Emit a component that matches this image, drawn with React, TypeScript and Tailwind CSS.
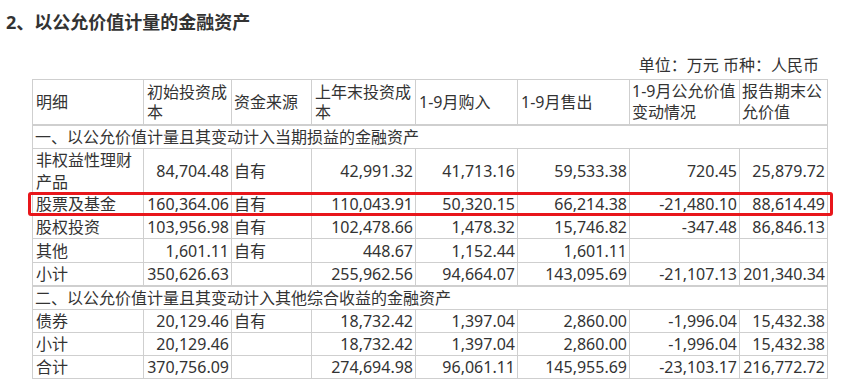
import React from "react";

type Row = {
  name: React.ReactNode;
  h: string;
  cells: string[];
};

const cols = "grid-cols-[110px_87px_79px_103px_101px_111px_109px_87px]";

const rows1: Row[] = [
  { name: <>非权益性理财<br />产品</>, h: "h-[43px]", cells: ["84,704.48", "自有", "42,991.32", "41,713.16", "59,533.38", "720.45", "25,879.72"] },
  { name: "股票及基金", h: "h-[22px]", cells: ["160,364.06", "自有", "110,043.91", "50,320.15", "66,214.38", "-21,480.10", "88,614.49"] },
  { name: "股权投资", h: "h-[22px]", cells: ["103,956.98", "自有", "102,478.66", "1,478.32", "15,746.82", "-347.48", "86,846.13"] },
  { name: "其他", h: "h-[23px]", cells: ["1,601.11", "自有", "448.67", "1,152.44", "1,601.11", "", ""] },
  { name: "小计", h: "h-[22px]", cells: ["350,626.63", "", "255,962.56", "94,664.07", "143,095.69", "-21,107.13", "201,340.34"] },
];

const rows2: Row[] = [
  { name: "债券", h: "h-[22px]", cells: ["20,129.46", "自有", "18,732.42", "1,397.04", "2,860.00", "-1,996.04", "15,432.38"] },
  { name: "小计", h: "h-[22px]", cells: ["20,129.46", "", "18,732.42", "1,397.04", "2,860.00", "-1,996.04", "15,432.38"] },
  { name: "合计", h: "h-[22px]", cells: ["370,756.09", "", "274,694.98", "96,061.11", "145,955.69", "-23,103.17", "216,772.72"] },
];

function DataRow({ r }: { r: Row }) {
  return (
    <>
      <div className={`bg-white ${r.h} flex items-center px-[3px] leading-[22px]`}>
        <span>{r.name}</span>
      </div>
      {r.cells.map((c, i) =>
        i === 1 ? (
          <div key={i} className={`bg-white ${r.h} flex items-center pl-[2px] leading-[22px]`}>
            {c}
          </div>
        ) : (
          <div key={i} className={`bg-white ${r.h} flex items-center justify-end pr-[2px] leading-[22px]`}>
            {c}
          </div>
        )
      )}
    </>
  );
}

export default function App() {
  return (
    <div className="relative w-[844px] h-[384px] bg-white text-[#333] font-['Noto_Sans','Noto_Sans_CJK_SC',sans-serif] text-[16px] overflow-hidden">
      <div className="pl-[6px] pt-[10px] h-[34px] text-[18px] leading-[24px] font-bold">
        2、以公允价值计量的金融资产
      </div>
      <div className="flex justify-end pr-[25px] mt-[20px] h-[22px] leading-[22px]">
        单位：万元 币种：人民币
      </div>
      <div className="pl-[32px] mt-[3px]">
        <div className={`grid ${cols} gap-px p-px bg-[#cfcfcf] w-[796px]`}>
          <div className="bg-white h-[44px] flex items-center px-[3px]">明细</div>
          <div className="bg-white h-[44px] flex items-center px-[3px] leading-[20px]">
            初始投资成<br />本
          </div>
          <div className="bg-white h-[44px] flex items-center px-[2px]">资金来源</div>
          <div className="bg-white h-[44px] flex items-center px-[3px] leading-[20px]">
            上年末投资成<br />本
          </div>
          <div className="bg-white h-[44px] flex items-center px-[3px]">1-9月购入</div>
          <div className="bg-white h-[44px] flex items-center px-[3px]">1-9月售出</div>
          <div className="bg-white h-[44px] flex items-center px-[2px] leading-[21px]">
            <span>1-9月公允价值<br />变动情况</span>
          </div>
          <div className="bg-white h-[44px] flex items-center px-[2px] leading-[21px]">
            <span>报告期末公<br />允价值</span>
          </div>

          <div className="col-span-8 h-0"></div>
          <div className="col-span-8 bg-white h-[22px] flex items-center px-[2px] leading-[22px]">
            一、以公允价值计量且其变动计入当期损益的金融资产
          </div>
          {rows1.map((r, i) => (
            <DataRow key={i} r={r} />
          ))}
          <div className="col-span-8 h-0"></div>
          <div className="col-span-8 bg-white h-[22px] flex items-center px-[2px] leading-[22px]">
            二、以公允价值计量且其变动计入其他综合收益的金融资产
          </div>
          {rows2.map((r, i) => (
            <DataRow key={i} r={r} />
          ))}
        </div>
      </div>
      <div className="absolute left-[28px] top-[192px] w-[805px] h-[24px] border-[3px] border-[#e8161b] rounded-[3px]"></div>
    </div>
  );
}
